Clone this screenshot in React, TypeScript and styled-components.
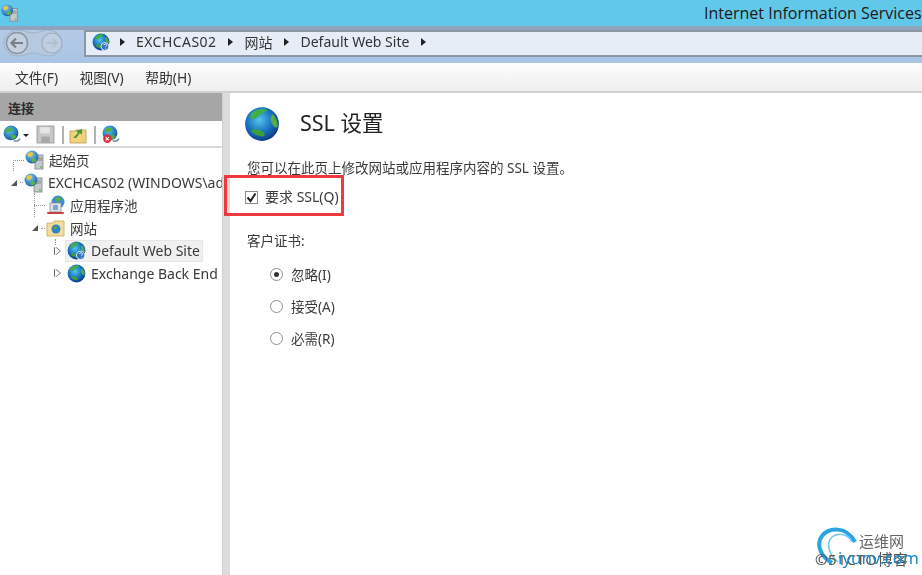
import React from 'react';
import styled, { createGlobalStyle } from 'styled-components';

const Global = createGlobalStyle`
  html, body { margin: 0; padding: 0; background: #fff; overflow: hidden; }
  body { font-family: "Noto Sans", "Noto Sans CJK SC", sans-serif; color: #3a3a3a; }
  * { box-sizing: border-box; }
`;

const Window = styled.div`
  position: relative;
  width: 922px;
  height: 575px;
  display: flex;
  flex-direction: column;
  overflow: hidden;
  filter: blur(0.4px);
`;

const TitleBar = styled.div`
  height: 26px;
  flex: none;
  background: #62c8ea;
  display: flex;
  align-items: center;
  padding-left: 1px;
  overflow: hidden;
  white-space: nowrap;
`;

const TitleText = styled.span`
  margin-left: 685px;
  font-family: "Open Sans", sans-serif;
  font-size: 16px;
  color: #1a1a1a;
  flex: none;
`;

const NavBar = styled.div`
  height: 37px;
  flex: none;
  background: linear-gradient(#b4cbe6, #a9c4e4);
  border-top: 4px solid #8fa3bd;
  display: flex;
  align-items: flex-start;
  padding-left: 3px;
  gap: 21px;
`;

const BackForward = styled.svg`
  flex: none;
  margin-top: -2px;
`;

const AddressBox = styled.div`
  flex: 1;
  height: 27px;
  background: #e6edf6;
  border: 2px solid #8c97a6;
  border-right: 0;
  display: flex;
  align-items: center;
  padding: 0 0 4px 6px;
  font-size: 14px;
  color: #333;
`;

const Crumb = styled.span<{ $spacing?: number }>`
  margin-right: 2px;
  letter-spacing: ${(p) => p.$spacing ?? 0}px;
`;

const CrumbArrow = styled.span`
  width: 0;
  height: 0;
  margin: 0 11px 0 10px;
  border-left: 5px solid #222;
  border-top: 4px solid transparent;
  border-bottom: 4px solid transparent;
`;

const MenuBar = styled.div`
  height: 30px;
  flex: none;
  background: linear-gradient(#fdfdfd, #eeeeee);
  border-bottom: 2px solid #d0d0d0;
  display: flex;
  align-items: center;
  padding-left: 15px;
  gap: 21.5px;
  font-size: 13.8px;
  color: #333;
`;

const Body = styled.div`
  flex: 1;
  display: flex;
  min-height: 0;
`;

const Sidebar = styled.aside`
  width: 222px;
  flex: none;
  display: flex;
  flex-direction: column;
  overflow: hidden;
`;

const SideHeader = styled.div`
  height: 28px;
  flex: none;
  background: #a6a6a6;
  padding-left: 8px;
  display: flex;
  align-items: center;
  font-size: 13px;
  font-weight: 700;
  color: #2c2c2c;
`;

const SideTools = styled.div`
  height: 27px;
  flex: none;
  border-bottom: 2px solid #d8d8d8;
  display: flex;
  align-items: center;
  padding: 2px 0 0 2px;
`;

const ToolSep = styled.span`
  width: 2px;
  height: 18px;
  background: #b4b4b4;
  margin: 0 5px 0 7px;
`;

const DropArrow = styled.span`
  width: 0;
  height: 0;
  margin: 2px 7px 0 2px;
  border-top: 3px solid #222;
  border-left: 3px solid transparent;
  border-right: 3px solid transparent;
`;

const Tree = styled.div`
  position: relative;
  padding-top: 1px;
  display: flex;
  flex-direction: column;
`;

const TreeRow = styled.div<{ $depth: number }>`
  height: 22.6px;
  display: flex;
  align-items: center;
  padding-left: ${(p) => p.$depth}px;
  font-size: 14px;
  color: #3a3a3a;
  white-space: nowrap;
`;

const GuideLine = styled.span<{ $x: number; $y: number; $h: number }>`
  position: absolute;
  left: ${(p) => p.$x}px;
  top: ${(p) => p.$y}px;
  height: ${(p) => p.$h}px;
  border-left: 1px dotted #999;
`;

const Expander = styled.span<{ $open?: boolean }>`
  width: 12px;
  flex: none;
  display: flex;
  justify-content: center;
  &::before {
    content: "";
    width: 0;
    height: 0;
    ${(p) =>
      p.$open
        ? `border-bottom: 6px solid #555; border-left: 6px solid transparent;`
        : `border-left: 5px solid #fff; border-top: 4px solid transparent; border-bottom: 4px solid transparent; filter: drop-shadow(-1px 0 0 #666) drop-shadow(1px 0 0 #666);`}
  }
`;

const Dots = styled.span<{ $w: number }>`
  width: ${(p) => p.$w}px;
  flex: none;
  border-top: 1px dotted #999;
  margin-right: 1px;
`;

const NodeLabel = styled.span<{ $size?: number }>`
  margin-left: 4px;
  font-size: ${(p) => p.$size ?? 14}px;
`;

const SelectedNode = styled.span`
  display: flex;
  align-items: center;
  gap: 5px;
  height: 22px;
  width: 138px;
  margin-left: 2px;
  padding-left: 1px;
  background: #f0f0f0;
  border: 1px solid #e6e6e6;
`;

const PlainNode = styled.span`
  display: flex;
  align-items: center;
  gap: 5px;
  margin-left: 2px;
  padding-left: 2px;
`;

const Splitter = styled.div`
  width: 8px;
  flex: none;
  background: #dcdcdc;
  border-left: 1px solid #cfcfcf;
`;

const Main = styled.main`
  flex: 1;
  padding: 13px 0 0 15px;
  background: #fff;
`;

const Heading = styled.div`
  display: flex;
  align-items: center;
  gap: 20px;
  height: 36px;
  margin-left: -1px;
`;

const HeadingText = styled.h1`
  margin: 0 0 6px 0;
  font-size: 21.5px;
  font-weight: 400;
  color: #222;
`;

const Description = styled.p`
  margin: 17px 0 0 2px;
  font-size: 13.5px;
  line-height: 18px;
  color: #3a3a3a;
`;

const CheckRow = styled.label`
  margin: 9px 0 0 0;
  display: flex;
  align-items: center;
  gap: 7px;
  font-size: 14px;
  height: 20px;
`;

const CheckBox = styled.span`
  width: 13px;
  height: 13px;
  margin-top: 2px;
  border: 1px solid #8e8e8e;
  background: #fff;
  display: flex;
  align-items: center;
  justify-content: center;
`;

const GroupLabel = styled.div`
  margin: 26px 0 0 2px;
  font-size: 13.5px;
  line-height: 18px;
`;

const RadioList = styled.div`
  margin: 14px 0 0 25px;
  display: flex;
  flex-direction: column;
  gap: 12px;
`;

const RadioRow = styled.label`
  display: flex;
  align-items: center;
  gap: 8px;
  height: 20px;
  font-size: 13.5px;
`;

const Radio = styled.span<{ $on?: boolean }>`
  width: 13px;
  height: 13px;
  border-radius: 50%;
  border: 1px solid #8e8e8e;
  background: #fff;
  display: flex;
  align-items: center;
  justify-content: center;
  &::after {
    content: "";
    width: 5px;
    height: 5px;
    border-radius: 50%;
    background: ${(p) => (p.$on ? '#333' : 'transparent')};
  }
`;

const Highlight = styled.div`
  position: absolute;
  left: 224px;
  top: 175px;
  width: 120px;
  height: 41px;
  border: 3px solid #ee3a3e;
  pointer-events: none;
`;

const Watermark = styled.div`
  position: absolute;
  left: 812px;
  top: 526px;
  width: 110px;
  height: 49px;
  pointer-events: none;
`;

const WmTop = styled.span`
  position: absolute;
  left: 47px;
  top: 4px;
  font-size: 15px;
  color: #666;
`;

const WmBack = styled.span`
  position: absolute;
  left: 3px;
  top: 22px;
  font-size: 15px;
  letter-spacing: 0.6px;
  color: #555;
  white-space: nowrap;
`;

const WmFront = styled.span`
  position: absolute;
  left: 26px;
  top: 20px;
  font-size: 17px;
  color: #1e88c8;
  white-space: nowrap;
`;

const WmArc = styled.svg`
  position: absolute;
  left: 4px;
  top: 0;
`;

const Globe = ({ size, id, help }: { size: number; id: string; help?: boolean }) => (
  <svg width={size} height={size} viewBox="0 0 32 32" style={{ flex: 'none' }}>
    <defs>
      <radialGradient id={id} cx="42%" cy="38%" r="70%">
        <stop offset="0%" stopColor="#55c4ec" />
        <stop offset="55%" stopColor="#1670bf" />
        <stop offset="100%" stopColor="#0a2c78" />
      </radialGradient>
    </defs>
    <circle cx="16" cy="16" r="15" fill={`url(#${id})`} />
    <path d="M7 6c3-3 9-4 13-3 1 2-3 3-5 4-2 2-4 4-7 5-3 0-3-4-1-6z" fill="#3fae4a" />
    <path d="M25 7c3 2 5 7 5 11-1 2-3 1-4-1-2-2-3-5-2-8z" fill="#57ad3f" />
    <path d="M7 21c3-1 7 0 10 2 2 1 2 3 0 4-3 0-7-1-9-3-1-1-2-2-1-3z" fill="#3f9e3c" />
    {help && (
      <>
        <circle cx="23" cy="24" r="7" fill="#2f6fc0" stroke="#fff" strokeWidth="1.5" />
        <path d="M21 22c0-3 5-3 5 0 0 2-2 2-2 3.500M24 27v1" stroke="#fff" strokeWidth="1.500" fill="none" />
      </>
    )}
  </svg>
);

const ServerGlobe = ({ id, size = 20 }: { id: string; size?: number }) => (
  <svg width={size} height={size} viewBox="0 0 20 20" style={{ flex: 'none' }}>
    <defs>
      <radialGradient id={id} cx="40%" cy="30%" r="75%">
        <stop offset="0%" stopColor="#7fd0f5" />
        <stop offset="100%" stopColor="#14589e" />
      </radialGradient>
    </defs>
    <rect x="10" y="5" width="8" height="14" fill="#c4c8cc" stroke="#7d8286" strokeWidth="0.8" />
    <path d="M11 8h6M11 10h6" stroke="#777" strokeWidth="0.8" />
    <circle cx="16" cy="17" r="1" fill="#5fc04a" />
    <circle cx="7" cy="7" r="6.500" fill={`url(#${id})`} />
    <path d="M3 3c2-1 5-1 5 1 0 2-3 3-4 3-2-1-2-3-1-4z" fill="#f0c640" />
    <path d="M8 8c2 0 4 1 3 3-1 1-3 2-4 1-1-1-1-3 1-4z" fill="#5cb544" />
  </svg>
);

const AppPool = () => (
  <svg width="20" height="20" viewBox="0 0 20 20" style={{ flex: 'none' }}>
    <circle cx="12" cy="7" r="6.500" fill="#3c8fd0" />
    <path d="M9 3c3-2 6-1 6 1s-3 3-5 2z" fill="#58ae42" />
    <rect x="4" y="8" width="11" height="9" fill="#dfe2e6" stroke="#8b8f94" strokeWidth="0.8" />
    <rect x="7" y="10" width="5" height="5" fill="#7aa7d4" />
    <path d="M2 18h15" stroke="#c4473f" strokeWidth="2" strokeLinecap="round" />
  </svg>
);

const SitesFolder = ({ id }: { id: string }) => (
  <svg width="20" height="20" viewBox="0 0 20 20" style={{ flex: 'none' }}>
    <path d="M1 5h6l1-2h10v15H1z" fill="#f5dc98" stroke="#c8a95c" strokeWidth="0.8" />
    <circle cx="10" cy="11" r="4.500" fill="#2f83c7" id={id} />
    <path d="M8 9c2-1 3 0 3 1s-2 2-3 1z" fill="#57ad3f" />
  </svg>
);

// toolbar glyph: globe with the small connect arrow under it
const ToolGlobe = ({ id, stop }: { id: string; stop?: boolean }) => (
  <svg width="19" height="19" viewBox="0 0 18 18" style={{ flex: 'none' }}>
    <defs>
      <radialGradient id={id} cx="40%" cy="35%" r="70%">
        <stop offset="0%" stopColor="#5cc4ec" />
        <stop offset="100%" stopColor="#10509e" />
      </radialGradient>
    </defs>
    <path d="M11 15c3 1 5 0 6-2" stroke="#7f94a8" strokeWidth="1.500" fill="none" />
    <circle cx="8.500" cy="7.500" r="7" fill={`url(#${id})`} />
    <path d="M4 4c3-2 6-2 6 0s-3 3-5 3c-2-1-2-2-1-3zM10 9c2 0 4 1 3 3s-3 2-4 1-1-3 1-4z" fill="#4fae44" />
    {stop && (
      <>
        <circle cx="6" cy="13" r="4" fill="#d8303a" />
        <path d="M4.500 11.500l3 3m0-3l-3 3" stroke="#fff" strokeWidth="1" />
      </>
    )}
  </svg>
);

const App: React.FC = () => {
  return (
    <Window>
      <Global />
      <TitleBar>
        <ServerGlobe id="g-title" size={18} />
        <TitleText>Internet Information Services</TitleText>
      </TitleBar>

      <NavBar>
        <BackForward width="60" height="30" viewBox="0 0 60 30">
          <path
            d="M15 2c6 0 9 3 15 3s9-3 15-3c8 0 14 6 14 13s-6 13-14 13c-6 0-9-3-15-3s-9 3-15 3C7 28 1 22 1 15S7 2 15 2z"
            fill="#b7c9df"
            stroke="#a0b2c8"
          />
          <circle cx="14" cy="15" r="10.500" fill="#c3d0e0" stroke="#8d96a2" strokeWidth="1.500" />
          <path d="M20 15H9M13 10.500 8.500 15l4.500 4.500" stroke="#7a7f86" strokeWidth="2.200" fill="none" />
          <circle cx="49" cy="15" r="10" fill="#bfcee0" stroke="#a3afbd" strokeWidth="1.200" />
          <path d="M43 15h11M50 11l4 4-4 4" stroke="#b4c0ce" strokeWidth="2" fill="none" />
        </BackForward>
        <AddressBox>
          <Globe size={18} id="g-addr" help />
          <CrumbArrow />
          <Crumb $spacing={0.45}>EXCHCAS02</Crumb>
          <CrumbArrow />
          <Crumb>网站</Crumb>
          <CrumbArrow />
          <Crumb>Default Web Site</Crumb>
          <CrumbArrow />
        </AddressBox>
      </NavBar>

      <MenuBar>
        <span>文件(F)</span>
        <span>视图(V)</span>
        <span>帮助(H)</span>
      </MenuBar>

      <Body>
        <Sidebar>
          <SideHeader>连接</SideHeader>
          <SideTools>
            <ToolGlobe id="g-tool1" />
            <DropArrow />
            <svg width="19" height="19" viewBox="0 0 18 18">
              <rect x="1" y="1" width="16" height="16" fill="#c8c8c8" stroke="#a2a2a2" />
              <rect x="4" y="2" width="9" height="6" fill="#e6e6e6" />
              <rect x="5" y="11" width="8" height="6" fill="#a8a8a8" />
            </svg>
            <ToolSep />
            <svg width="18" height="18" viewBox="0 0 18 18">
              <path d="M1 5h5l1-1h10v13H1z" fill="#f3d27c" stroke="#b99a4e" strokeWidth="0.8" />
              <path d="M4 12l5-5-2-2 6-2v6l-2-2-4 5z" fill="#3e9a3a" />
            </svg>
            <ToolSep />
            <ToolGlobe id="g-tool2" stop />
          </SideTools>
          <Tree>
            <GuideLine $x={13} $y={12} $h={11} />
            <GuideLine $x={34} $y={45} $h={24} />
            <GuideLine $x={55} $y={91} $h={6} />
            <TreeRow $depth={13}>
              <Dots $w={11} />
              <ServerGlobe id="g-start" />
              <NodeLabel $size={13.5}>起始页</NodeLabel>
            </TreeRow>
            <TreeRow $depth={8}>
              <Expander $open />
              <Dots $w={3} />
              <ServerGlobe id="g-host" />
              <NodeLabel>EXCHCAS02 (WINDOWS\administrator)</NodeLabel>
            </TreeRow>
            <TreeRow $depth={34}>
              <Dots $w={11} />
              <AppPool />
              <NodeLabel $size={13.5}>应用程序池</NodeLabel>
            </TreeRow>
            <TreeRow $depth={29}>
              <Expander $open />
              <Dots $w={4} />
              <SitesFolder id="g-sites" />
              <NodeLabel $size={13.5}>网站</NodeLabel>
            </TreeRow>
            <TreeRow $depth={51}>
              <Expander />
              <SelectedNode>
                <Globe size={19} id="g-default" help />
                <span>Default Web Site</span>
              </SelectedNode>
            </TreeRow>
            <TreeRow $depth={51}>
              <Expander />
              <PlainNode>
                <Globe size={19} id="g-exchange" />
                <span>Exchange Back End</span>
              </PlainNode>
            </TreeRow>
          </Tree>
        </Sidebar>

        <Splitter />

        <Main>
          <Heading>
            <Globe size={36} id="g-head" />
            <HeadingText>SSL 设置</HeadingText>
          </Heading>
          <Description>您可以在此页上修改网站或应用程序内容的 SSL 设置。</Description>
          <CheckRow>
            <CheckBox>
              <svg width="11" height="11" viewBox="0 0 11 11">
                <path d="M1.500 5.500 4.500 9 9.500 1.500" stroke="#222" strokeWidth="2" fill="none" />
              </svg>
            </CheckBox>
            要求 SSL(Q)
          </CheckRow>
          <GroupLabel>客户证书:</GroupLabel>
          <RadioList>
            <RadioRow>
              <Radio $on />
              忽略(I)
            </RadioRow>
            <RadioRow>
              <Radio />
              接受(A)
            </RadioRow>
            <RadioRow>
              <Radio />
              必需(R)
            </RadioRow>
          </RadioList>
        </Main>
      </Body>

      <Highlight />
      <Watermark>
        <WmArc width="50" height="45" viewBox="0 0 50 45">
          <path d="M16 37C4 30 0 18 6 10 12 2 30-1 39 16" stroke="#2aa5e0" strokeWidth="4" fill="none" />
          <path d="M22 36C12 28 10 16 16 11 22 6 32 8 36 16" stroke="#6cc5ee" strokeWidth="1.500" fill="none" />
        </WmArc>
        <WmTop>运维网</WmTop>
        <WmBack>©51CTO博客</WmBack>
        <WmFront>iyunv.com</WmFront>
      </Watermark>
    </Window>
  );
};

export default App;
